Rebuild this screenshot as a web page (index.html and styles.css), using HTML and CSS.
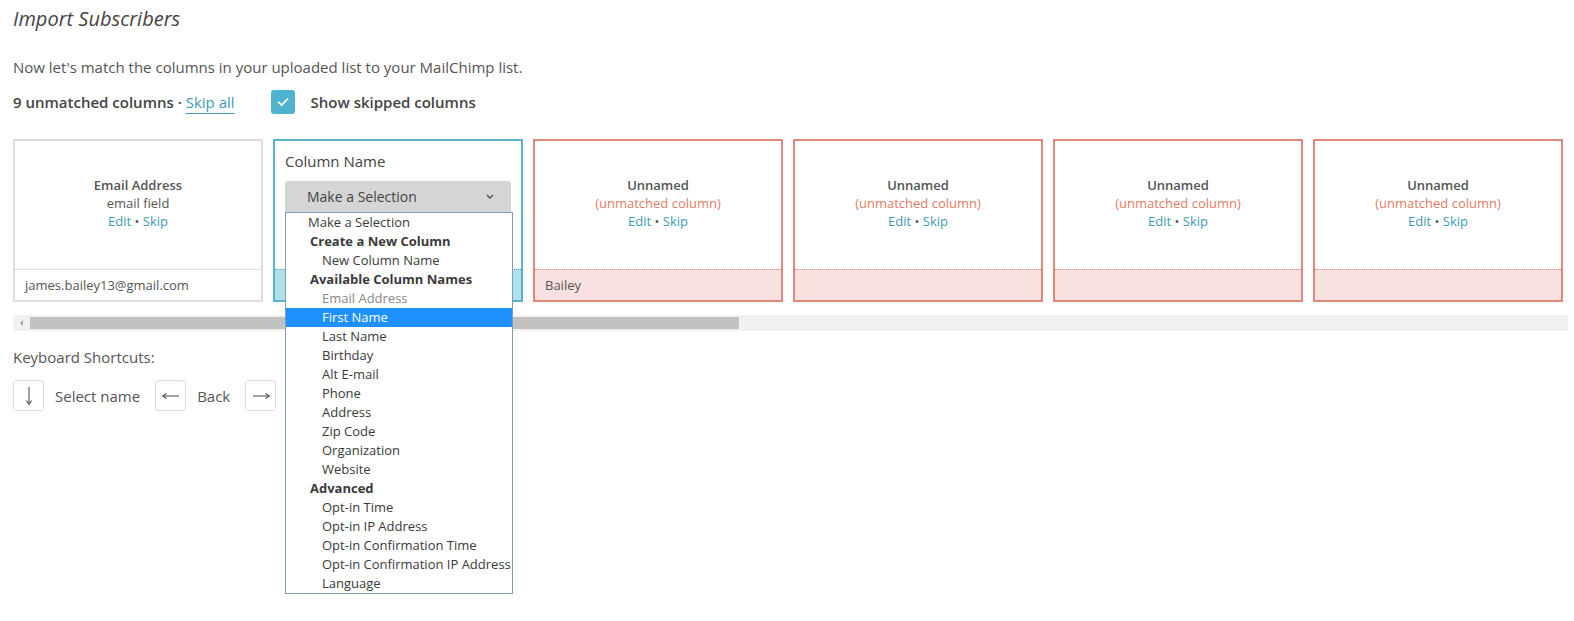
FILE: index.html
```html
<!DOCTYPE html>
<html lang="en">
<head>
<meta charset="utf-8">
<title>Import Subscribers</title>
<link rel="stylesheet" href="styles.css">
</head>
<body>
<main class="page">
  <h1 class="title">Import Subscribers</h1>
  <p class="intro">Now let's match the columns in your uploaded list to your MailChimp list.</p>

  <div class="status">
    <span class="status-count">9 unmatched columns · <a href="#" class="link underline">Skip all</a></span>
    <label class="toggle">
      <span class="checkbox">
        <svg width="12" height="10" viewBox="0 0 12 10"><polyline points="1.5,5.2 4.6,8.2 10.5,2" fill="none" stroke="#fff" stroke-width="1.8" stroke-linecap="round" stroke-linejoin="round"/></svg>
      </span>
      <span>Show skipped columns</span>
    </label>
  </div>

  <div class="columns">
    <section class="col col-matched">
      <div class="col-head">
        <div class="col-name">Email Address</div>
        <div class="col-type">email field</div>
        <div class="col-actions"><a href="#" class="link">Edit</a> • <a href="#" class="link">Skip</a></div>
      </div>
      <div class="col-sample">james.bailey13@gmail.com</div>
    </section>

    <section class="col col-active">
      <div class="col-editor">
        <div class="editor-label">Column Name</div>
        <div class="picker">
          <div class="picker-button">
            <span>Make a Selection</span>
            <svg width="8" height="5" viewBox="0 0 8 5"><polyline points="1,1 4,4 7,1" fill="none" stroke="#555" stroke-width="1.4"/></svg>
          </div>
          <ul class="picker-menu">
            <li class="opt-top">Make a Selection</li>
            <li class="group">Create a New Column</li>
            <li class="opt">New Column Name</li>
            <li class="group">Available Column Names</li>
            <li class="opt disabled">Email Address</li>
            <li class="opt selected">First Name</li>
            <li class="opt">Last Name</li>
            <li class="opt">Birthday</li>
            <li class="opt">Alt E-mail</li>
            <li class="opt">Phone</li>
            <li class="opt">Address</li>
            <li class="opt">Zip Code</li>
            <li class="opt">Organization</li>
            <li class="opt">Website</li>
            <li class="group">Advanced</li>
            <li class="opt">Opt-in Time</li>
            <li class="opt">Opt-in IP Address</li>
            <li class="opt">Opt-in Confirmation Time</li>
            <li class="opt">Opt-in Confirmation IP Address</li>
            <li class="opt">Language</li>
          </ul>
        </div>
      </div>
      <div class="col-sample"></div>
    </section>

    <section class="col col-unmatched">
      <div class="col-head">
        <div class="col-name">Unnamed</div>
        <div class="col-note">(unmatched column)</div>
        <div class="col-actions"><a href="#" class="link">Edit</a> • <a href="#" class="link">Skip</a></div>
      </div>
      <div class="col-sample">Bailey</div>
    </section>

    <section class="col col-unmatched">
      <div class="col-head">
        <div class="col-name">Unnamed</div>
        <div class="col-note">(unmatched column)</div>
        <div class="col-actions"><a href="#" class="link">Edit</a> • <a href="#" class="link">Skip</a></div>
      </div>
      <div class="col-sample"></div>
    </section>

    <section class="col col-unmatched">
      <div class="col-head">
        <div class="col-name">Unnamed</div>
        <div class="col-note">(unmatched column)</div>
        <div class="col-actions"><a href="#" class="link">Edit</a> • <a href="#" class="link">Skip</a></div>
      </div>
      <div class="col-sample"></div>
    </section>

    <section class="col col-unmatched">
      <div class="col-head">
        <div class="col-name">Unnamed</div>
        <div class="col-note">(unmatched column)</div>
        <div class="col-actions"><a href="#" class="link">Edit</a> • <a href="#" class="link">Skip</a></div>
      </div>
      <div class="col-sample"></div>
    </section>
  </div>

  <div class="hscroll">
    <span class="hscroll-arrow"></span>
    <span class="hscroll-thumb"></span>
  </div>

  <p class="shortcuts-title">Keyboard Shortcuts:</p>
  <div class="shortcuts">
    <span class="key">
      <svg width="12" height="20" viewBox="0 0 12 20"><line x1="6" y1="1" x2="6" y2="18" stroke="#555" stroke-width="1.1"/><polyline points="3.5,14.5 6,18.5 8.5,14.5" fill="none" stroke="#555" stroke-width="1.1"/></svg>
    </span>
    <span class="key-label">Select name</span>
    <span class="key">
      <svg width="20" height="12" viewBox="0 0 20 12"><line x1="2" y1="6" x2="18" y2="6" stroke="#555" stroke-width="1.1"/><polyline points="5.5,3.5 1.5,6 5.5,8.5" fill="none" stroke="#555" stroke-width="1.1"/></svg>
    </span>
    <span class="key-label">Back</span>
    <span class="key">
      <svg width="20" height="12" viewBox="0 0 20 12"><line x1="2" y1="6" x2="18" y2="6" stroke="#555" stroke-width="1.1"/><polyline points="14.5,3.5 18.5,6 14.5,8.5" fill="none" stroke="#555" stroke-width="1.1"/></svg>
    </span>
  </div>
</main>
</body>
</html>
```

FILE: styles.css
```css
* {
  box-sizing: border-box;
}

html,
body {
  min-height: 100%;
}

body {
  margin: 0;
  min-height: 621px;
  background: #fff;
  color: #555;
  font-family: "Open Sans", "Liberation Sans", sans-serif;
}

.page {
  padding: 5px 6px 0 13px;
}

.title {
  margin: 0;
  font-size: 20px;
  line-height: 28px;
  font-style: italic;
  font-weight: 400;
  color: #444;
}

.intro {
  margin: 24px 0 0;
  font-size: 15px;
  line-height: 20px;
}

.link {
  color: #3e9bb4;
  text-decoration: none;
}

.underline {
  text-decoration: underline;
  text-decoration-thickness: 1px;
  text-underline-offset: 5px;
}

/* counter + "show skipped" toggle */
.status {
  display: flex;
  align-items: center;
  height: 24px;
  margin-top: 13px;
  font-size: 15px;
  font-weight: 600;
  color: #444;
}

.status .link {
  font-weight: 400;
}

.toggle {
  display: flex;
  align-items: center;
  gap: 16px;
  margin-left: 36px;
}

.checkbox {
  display: flex;
  align-items: center;
  justify-content: center;
  width: 24px;
  height: 24px;
  border-radius: 3px;
  background: #4fb3cf;
}

/* column cards */
.columns {
  display: flex;
  gap: 10px;
  margin-top: 25px;
}

.col {
  display: flex;
  flex-direction: column;
  flex: 0 0 250px;
  height: 163px;
  border: 2px solid #ddd;
  background: #fff;
}

.col-head {
  display: flex;
  flex: 1;
  flex-direction: column;
  align-items: center;
  justify-content: center;
  padding-bottom: 4px;
  font-size: 13px;
  line-height: 18px;
  text-align: center;
}

.col-name {
  font-weight: 600;
  color: #555;
}

.col-note {
  color: #e07c66;
}

.col-sample {
  height: 31px;
  padding: 0 10px;
  border-top: 1px dotted #ccc;
  font-size: 13px;
  line-height: 30px;
  color: #555;
  white-space: nowrap;
  overflow: hidden;
}

.col-active {
  border-color: #5ab4c9;
}

.col-active .col-sample {
  background: #b1e0ed;
  border-top-color: #5ab4c9;
}

.col-unmatched {
  border-color: #dd8a7c;
}

.col-unmatched .col-sample {
  background: #fae1e1;
  border-top-color: #dd8a7c;
}

/* column name picker */
.col-editor {
  flex: 1;
  padding: 10px 10px 0;
}

.editor-label {
  font-size: 15px;
  line-height: 20px;
  color: #444;
}

.picker {
  position: relative;
  margin-top: 10px;
}

.picker-button {
  display: flex;
  align-items: center;
  justify-content: space-between;
  height: 31px;
  padding: 0 17px 0 22px;
  border-radius: 3px 3px 0 0;
  background: #d5d5d5;
  font-size: 14px;
  color: #444;
}

.picker-menu {
  position: absolute;
  top: 31px;
  left: 0;
  z-index: 10;
  width: 228px;
  margin: 0;
  padding: 0;
  list-style: none;
  background: #fff;
  border: 1px solid #7f9db9;
  font-size: 13px;
  line-height: 19px;
  color: #3a3a3a;
  white-space: nowrap;
}

.picker-menu li {
  height: 19px;
}

.opt-top {
  padding-left: 22px;
}

.group {
  padding-left: 24px;
  font-weight: 700;
}

.opt {
  padding-left: 36px;
}

.opt.disabled {
  color: #888;
}

.opt.selected {
  background: #1e90ff;
  color: #fff;
}

/* horizontal scroller under the cards */
.hscroll {
  display: flex;
  align-items: center;
  height: 16px;
  margin-top: 13px;
  background: #f1f1f1;
}

.hscroll-arrow {
  display: flex;
  align-items: center;
  justify-content: center;
  width: 17px;
  height: 16px;
}

.hscroll-arrow::before {
  content: "";
  border-top: 3px solid transparent;
  border-bottom: 3px solid transparent;
  border-right: 3px solid #a3a3a3;
}

.hscroll-thumb {
  width: 709px;
  height: 12px;
  background: #c1c1c1;
}

/* keyboard shortcuts */
.shortcuts-title {
  margin: 16px 0 0;
  font-size: 15px;
  line-height: 20px;
}

.shortcuts {
  display: flex;
  align-items: center;
  margin-top: 13px;
  font-size: 15px;
}

.key {
  display: flex;
  align-items: center;
  justify-content: center;
  width: 31px;
  height: 31px;
  border: 1px solid #ddd;
  border-radius: 3px;
}

.key-label {
  margin: 0 15px 0 11px;
}
```
